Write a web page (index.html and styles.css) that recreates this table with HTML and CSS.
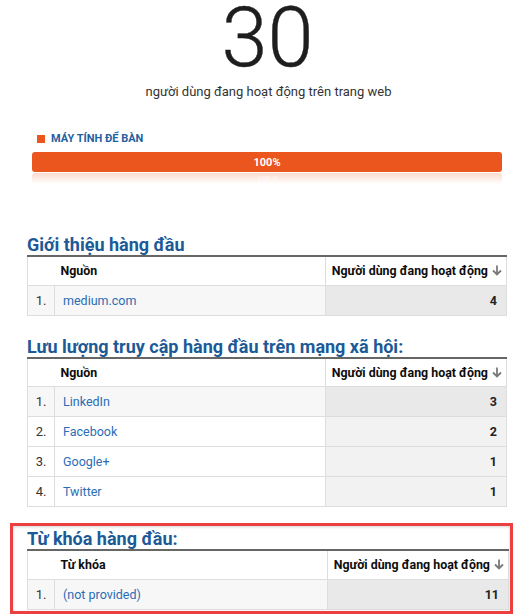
FILE: index.html
```html
<!DOCTYPE html>
<html lang="vi">
<head>
<meta charset="utf-8">
<link rel="stylesheet" href="styles.css">
</head>
<body>
<div class="page">
  <div class="summary">
    <div class="big">30</div>
    <div class="sub">người dùng đang hoạt động trên trang web</div>
  </div>
  <div class="device">
    <span class="dot"></span><span class="device-name">MÁY TÍNH ĐỂ BÀN</span>
  </div>
  <div class="bar"><span>100%</span></div>
  <div class="reflect"><span>100%</span></div>

  <section class="sec sec-first">
    <h2 class="title">Giới thiệu hàng đầu</h2>
    <table class="tbl">
      <thead>
        <tr><th class="c-num"></th><th class="c-src">Nguồn</th><th class="c-val">Người dùng đang hoạt động <svg class="arrow" width="10" height="11" viewBox="0 0 10 11"><path d="M5 0.5V9.5M1 5.5L5 9.5L9 5.5" fill="none" stroke="#7a7a7a" stroke-width="1.8"/></svg></th></tr>
      </thead>
      <tbody>
        <tr class="hl"><td class="c-num">1.</td><td class="c-src"><a>medium.com</a></td><td class="c-val">4</td></tr>
      </tbody>
    </table>
  </section>

  <section class="sec">
    <h2 class="title">Lưu lượng truy cập hàng đầu trên mạng xã hội:</h2>
    <table class="tbl">
      <thead>
        <tr><th class="c-num"></th><th class="c-src">Nguồn</th><th class="c-val">Người dùng đang hoạt động <svg class="arrow" width="10" height="11" viewBox="0 0 10 11"><path d="M5 0.5V9.5M1 5.5L5 9.5L9 5.5" fill="none" stroke="#7a7a7a" stroke-width="1.8"/></svg></th></tr>
      </thead>
      <tbody>
        <tr class="hl"><td class="c-num">1.</td><td class="c-src"><a>LinkedIn</a></td><td class="c-val">3</td></tr>
        <tr><td class="c-num">2.</td><td class="c-src"><a>Facebook</a></td><td class="c-val">2</td></tr>
        <tr><td class="c-num">3.</td><td class="c-src"><a>Google+</a></td><td class="c-val">1</td></tr>
        <tr><td class="c-num">4.</td><td class="c-src"><a>Twitter</a></td><td class="c-val">1</td></tr>
      </tbody>
    </table>
  </section>

  <section class="sec sec-marked">
    <h2 class="title">Từ khóa hàng đầu:</h2>
    <table class="tbl">
      <thead>
        <tr><th class="c-num"></th><th class="c-src">Từ khóa</th><th class="c-val">Người dùng đang hoạt động <svg class="arrow" width="10" height="11" viewBox="0 0 10 11"><path d="M5 0.5V9.5M1 5.5L5 9.5L9 5.5" fill="none" stroke="#7a7a7a" stroke-width="1.8"/></svg></th></tr>
      </thead>
      <tbody>
        <tr class="hl"><td class="c-num">1.</td><td class="c-src"><a>(not provided)</a></td><td class="c-val">11</td></tr>
      </tbody>
    </table>
  </section>
</div>
</body>
</html>
```

FILE: styles.css
```css
* { box-sizing: border-box; }
html, body { margin: 0; padding: 0; background: #fff; }
body {
  font-family: Roboto, "Liberation Sans", Arial, sans-serif;
  color: #222;
  width: 519px;
  height: 615px;
  overflow: hidden;
}
.page { padding-top: 0; }

.summary { text-align: center; }
.big {
  font-size: 83px;
  line-height: 76px;
  font-weight: 300;
  color: #1e1e1e;
  padding-left: 16px;
  -webkit-text-stroke: 0.4px #1e1e1e;
}
.sub {
  margin-top: 8px;
  font-size: 13px;
  line-height: 16px;
  color: #333;
  padding-left: 18px;
}

.device {
  margin: 32px 0 0 37px;
  display: flex;
  align-items: center;
  height: 14px;
}
.dot {
  width: 8px;
  height: 8px;
  background: #ea561d;
  margin-right: 6px;
}
.device-name {
  font-size: 11px;
  line-height: 14px;
  font-weight: 700;
  color: #1f5f9f;
}

.bar {
  margin: 6px 0 0 32px;
  width: 470px;
  height: 20px;
  background: #ea561d;
  border-radius: 3px;
  color: #fff;
  font-size: 11px;
  font-weight: 700;
  display: flex;
  align-items: center;
  justify-content: center;
}
.reflect {
  margin: 1px 0 0 32px;
  width: 470px;
  height: 11px;
  border-radius: 3px 3px 0 0;
  background: linear-gradient(to bottom, rgba(234,86,29,0.22), rgba(234,86,29,0.02) 90%, rgba(234,86,29,0));
  color: rgba(255,255,255,0.6);
  font-size: 8px;
  font-weight: 700;
  text-align: center;
  line-height: 10px;
}
.reflect span { display: inline-block; transform: scaleY(-1); }

.sec { margin: 20px 0 0 27px; width: 480px; }
.sec-first { margin-top: 50px; }
.title {
  margin: 0;
  font-size: 18px;
  line-height: 21px;
  font-weight: 700;
  color: #1c5a97;
}
.tbl {
  width: 480px;
  border-collapse: collapse;
  table-layout: fixed;
  border-top: 2px solid #666;
  font-size: 12.5px;
}
.tbl th, .tbl td {
  border: 1px solid #ddd;
  padding: 0;
}
.tbl thead th { border-top: 0; }
.tbl th {
  height: 29px;
  font-size: 12.4px;
  font-weight: 700;
  color: #0d0d0d;
  text-align: left;
  background: #fff;
}
.tbl th.c-src { padding-left: 6px; }
.tbl th.c-val { text-align: right; padding-right: 4px; }
.tbl th.c-num { border-right: 0; }
.tbl thead th.c-src { border-left: 0; border-right: 0; }
.arrow { vertical-align: -1px; margin-left: 1px; }

.c-num { width: 27px; }
.c-val { width: 181px; }
.tbl td {
  height: 30px;
  color: #333;
}
.tbl td.c-num { text-align: center; color: #333; font-size: 13px; }
.tbl td.c-src { padding-left: 8px; }
.tbl td a { color: #2a6db5; text-decoration: none; }
.tbl td.c-val {
  text-align: right;
  padding-right: 9px;
  font-weight: 700;
  font-size: 12.5px;
  color: #222;
  background: #f2f2f2;
}
.tbl tr.hl td { background: #f7f7f7; }
.tbl tr.hl td.c-val { background: #e9e9e9; }

.sec-marked {
  margin: 16px 0 0 10px;
  width: 503px;
  border: 3px solid #ec3f3f;
  padding: 2px 2px 1px 14px;
  box-shadow: inset 0 1px 3px rgba(0,0,0,0.18);
}
.sec-marked .tbl { width: 482px; }
```
